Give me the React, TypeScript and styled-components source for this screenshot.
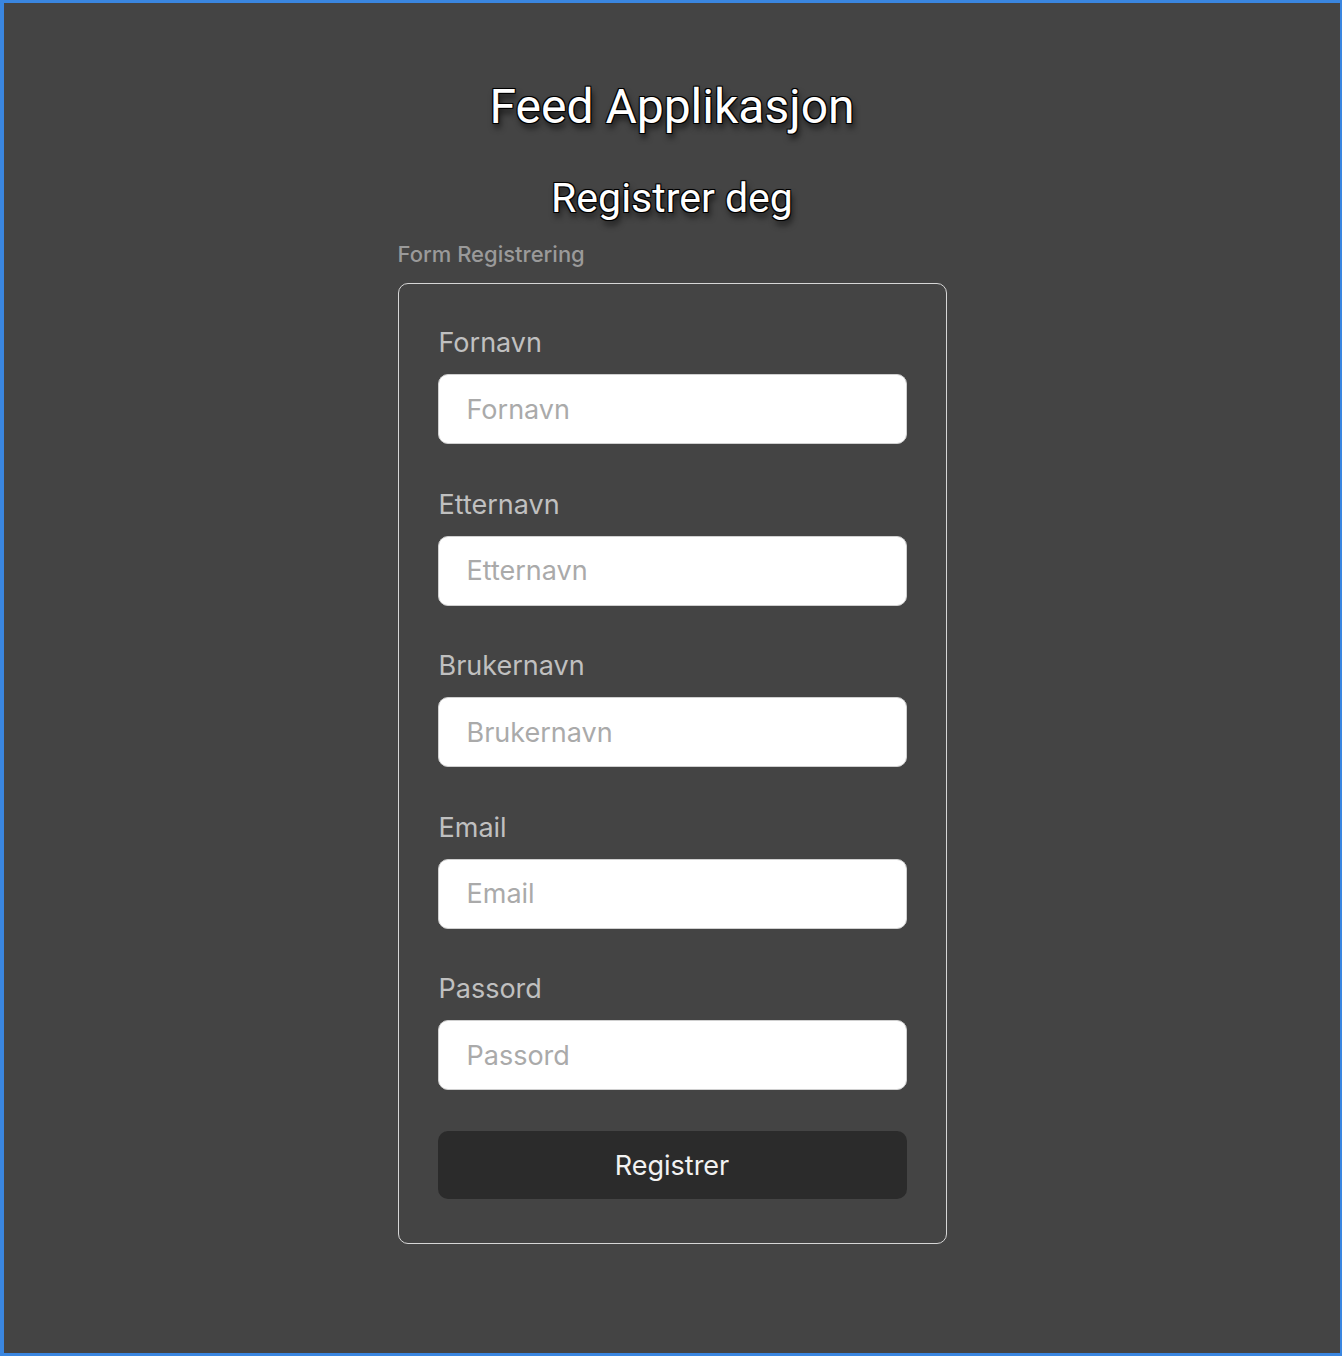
import React from "react";
import styled, { createGlobalStyle } from "styled-components";

const Global = createGlobalStyle`
  html, body { margin: 0; padding: 0; background: #444444; }
  * { box-sizing: border-box; }
`;

const Frame = styled.div`
  width: 1342px;
  height: 1356px;
  background: #444444;
  border-style: solid;
  border-color: #3a86e0;
  border-width: 3px 2px 3px 4px;
  display: flex;
  flex-direction: column;
  align-items: center;
`;

const Title = styled.h1`
  margin: 74px 0 0;
  font-family: Roboto, "Liberation Sans", sans-serif;
  font-weight: 400;
  font-size: 48px;
  line-height: 60px;
  color: #ffffff;
  text-shadow: -1px -1px 0 #000, 1px -1px 0 #000, -1px 1px 0 #000, 1px 1px 0 #000,
    0 0 2px #000, 2px 5px 6px rgba(0, 0, 0, 0.7);
`;

const Subtitle = styled.h2`
  margin: 38px 0 0;
  font-family: Roboto, "Liberation Sans", sans-serif;
  font-weight: 400;
  font-size: 41px;
  line-height: 46px;
  color: #ffffff;
  text-shadow: -1px -1px 0 #000, 1px -1px 0 #000, -1px 1px 0 #000, 1px 1px 0 #000,
    0 0 2px #000, 2px 5px 6px rgba(0, 0, 0, 0.7);
`;

const FormBlock = styled.div`
  width: 549px;
  margin-top: 20px;
  display: flex;
  flex-direction: column;
`;

const Legend = styled.div`
  font-family: Inter, "Liberation Sans", sans-serif;
  font-weight: 500;
  font-size: 22px;
  line-height: 26px;
  color: #9a9a9a;
  margin-bottom: 16px;
`;

const Card = styled.form`
  border: 1.5px solid #d6d6d6;
  border-radius: 10px;
  padding: 43px 39px 44px 39px;
  display: flex;
  flex-direction: column;
`;

const Fields = styled.div`
  display: flex;
  flex-direction: column;
  gap: 44.5px;
`;

const Field = styled.div`
  display: flex;
  flex-direction: column;
`;

const Label = styled.label`
  font-family: Inter, "Liberation Sans", sans-serif;
  font-size: 27px;
  line-height: 32px;
  color: #c0c0c0;
  margin: 0 0 15px 1px;
`;

const Input = styled.input`
  width: 469px;
  height: 70px;
  border: 1.5px solid #d0d0d0;
  border-radius: 10px;
  background: #ffffff;
  padding: 0 28px;
  font-family: Inter, "Liberation Sans", sans-serif;
  font-size: 27px;
  color: #333;
  outline: none;
  &::placeholder { color: #aaaaaa; }
`;

const Button = styled.button`
  width: 469px;
  height: 68px;
  margin-top: 41px;
  border: none;
  border-radius: 10px;
  background: #2b2b2b;
  color: #f2f2f2;
  font-family: Inter, "Liberation Sans", sans-serif;
  font-size: 27px;
  cursor: pointer;
`;

const fields = ["Fornavn", "Etternavn", "Brukernavn", "Email", "Passord"];

export default function App() {
  return (
    <>
      <Global />
      <Frame>
        <Title>Feed Applikasjon</Title>
        <Subtitle>Registrer deg</Subtitle>
        <FormBlock>
          <Legend>Form Registrering</Legend>
          <Card onSubmit={(e) => e.preventDefault()}>
            <Fields>
              {fields.map((f) => (
                <Field key={f}>
                  <Label>{f}</Label>
                  <Input placeholder={f} type={f === "Passord" ? "password" : "text"} />
                </Field>
              ))}
            </Fields>
            <Button type="submit">Registrer</Button>
          </Card>
        </FormBlock>
      </Frame>
    </>
  );
}
